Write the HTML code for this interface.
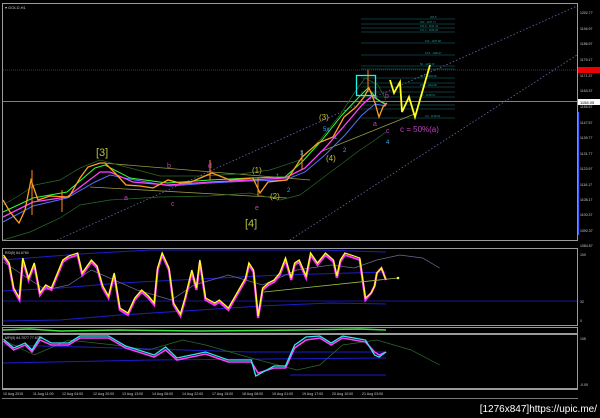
<!DOCTYPE html>
<html><head><meta charset="utf-8"><style>
html,body{margin:0;padding:0;background:#000;width:600px;height:418px;overflow:hidden}
svg{display:block}
text{font-family:"Liberation Sans",sans-serif}
</style></head><body>
<svg width="600" height="418" viewBox="0 0 600 418" xmlns="http://www.w3.org/2000/svg">
<rect width="600" height="418" fill="#000"/>
<g fill="none" stroke="#9a9a9a" stroke-width="1">
<rect x="2.5" y="3.5" width="575" height="237"/>
<rect x="2.5" y="248.5" width="575" height="77"/>
<rect x="2.5" y="327.5" width="575" height="6"/>
<rect x="2.5" y="334.5" width="575" height="54"/>
</g>
<line x1="2" y1="389.5" x2="578" y2="389.5" stroke="#9a9a9a"/>
<line x1="2" y1="398.5" x2="578" y2="398.5" stroke="#777"/>
<text x="5" y="9" fill="#ccc" font-size="4">▾ GOLD,H1</text>
<line x1="3" y1="70" x2="577" y2="70" stroke="#c00" stroke-dasharray="1,1"/>
<line x1="3" y1="101.5" x2="577" y2="101.5" stroke="#aaa" stroke-width="0.8"/>
<g stroke="#6a6ab0" stroke-width="0.8" stroke-dasharray="1.5,2" fill="none">
<line x1="57" y1="240" x2="577" y2="6"/>
<line x1="290" y1="240" x2="577" y2="55"/>
</g>
<!-- fib lines -->
<g stroke="#1d7070" stroke-width="0.5">
<line x1="361" y1="19" x2="455" y2="19"/><line x1="361" y1="24" x2="455" y2="24"/>
<line x1="361" y1="28" x2="455" y2="28"/><line x1="361" y1="32" x2="455" y2="32"/>
<line x1="361" y1="43" x2="455" y2="43"/><line x1="361" y1="55" x2="455" y2="55"/>
<line x1="361" y1="66" x2="455" y2="66"/><line x1="361" y1="69" x2="455" y2="69"/>
<line x1="361" y1="78" x2="455" y2="78"/><line x1="361" y1="83" x2="455" y2="83"/>
<line x1="361" y1="87" x2="455" y2="87"/><line x1="361" y1="92" x2="455" y2="92"/>
<line x1="361" y1="97" x2="455" y2="97"/><line x1="361" y1="105" x2="455" y2="105"/>
<line x1="361" y1="109" x2="455" y2="109"/><line x1="361" y1="118" x2="455" y2="118"/>
</g>
<g font-size="2.6" fill="#2a9a9a">
<text x="430" y="18">261.8</text><text x="420" y="23">200 - 1197.77</text><text x="420" y="27">161.8 - 1191.41</text><text x="420" y="31">127.2 - 1183.26</text>
<text x="425" y="42">100 - 1187.98</text><text x="425" y="54">61.8 - 1180.47</text><text x="420" y="65">50 - 1175.16</text>
<text x="420" y="77">38.2 - 1166.28</text><text x="420" y="86">23.6 - 1164.28</text><text x="420" y="96">0.0 - 1158.51</text><text x="425" y="117">0.0 - 1148.03</text>
</g>
<!-- triangle lines -->
<g stroke="#9a9a40" stroke-width="0.8" fill="none">
<line x1="103" y1="163" x2="310" y2="180"/>
<line x1="90" y1="187" x2="287" y2="198"/>
<line x1="320" y1="152" x2="417" y2="113"/>
</g>
<!-- envelopes -->
<polyline fill="none" stroke="#2a6a2a" stroke-width="0.7" points="3,205 20,195 35,185 60,180 80,168 100,160 130,168 160,176 200,176 240,174 270,170 300,160 320,140 340,115 355,92 365,78 378,85 386,100"/>
<polyline fill="none" stroke="#2a6a2a" stroke-width="0.7" points="3,240 30,232 60,218 80,205 110,200 160,197 210,196 250,193 280,200 300,195 320,180 340,165 360,150 375,140 386,132"/>
<!-- MAs -->
<polyline fill="none" stroke="#5070ff" stroke-width="1" points="3,222 33,206 67,198 95,182 110,175 135,180 170,186 210,183 250,181 285,180 305,172 325,155 345,135 362,115 375,104 386,106"/>
<polyline fill="none" stroke="#ff40ff" stroke-width="1.3" points="3,217 33,202 67,197 100,172 110,172 133,182 167,185 210,182 250,180 285,178 305,168 325,148 345,125 362,105 372,96 386,105"/>
<polyline fill="none" stroke="#30ff30" stroke-width="1" points="3,212 33,198 67,192 95,168 105,165 130,178 167,183 210,180 250,178 285,177 302,162 322,140 342,115 358,98 368,88 378,100 386,104"/>
<!-- price -->
<polyline fill="none" stroke="#ffa020" stroke-width="1.3" points="3,200 10,212 19,223 25,210 31,180 38,200 50,196 69,197 80,178 88,167 100,163 105,163 115,173 126,185 140,186 153,188 168,180 180,183 191,182 212,173 230,180 253,178 260,193 268,182 287,180 302,157 318,143 333,137 344,117 356,107 364,97 369,88 375,103 379,117 383,107 387,103"/>
<g stroke="#ff8a20" stroke-width="1">
<line x1="32" y1="170" x2="32" y2="215"/><line x1="62" y1="190" x2="62" y2="212"/><line x1="210" y1="160" x2="210" y2="180"/>
<line x1="258" y1="178" x2="258" y2="196"/><line x1="302" y1="150" x2="302" y2="170"/><line x1="368" y1="70" x2="368" y2="92"/>
</g>
<rect x="356.5" y="75.5" width="19" height="20" fill="none" stroke="#2ee" stroke-width="1.3"/>
<polyline fill="none" stroke="#ffff20" stroke-width="1.8" points="390,80 394,93 400,82 402,112 409,97 415,117 430,65"/>
<g font-size="11" fill="#b8c040">
<text x="96" y="156">[3]</text><text x="245" y="227">[4]</text>
</g>
<g font-size="8" fill="#c8c030">
<text x="252" y="173">(1)</text><text x="270" y="199">(2)</text><text x="319" y="120">(3)</text><text x="326" y="161">(4)</text>
</g>
<g font-size="7" fill="#c040c0">
<text x="167" y="168">b</text><text x="124" y="200">a</text><text x="171" y="206">c</text><text x="208" y="168">d</text><text x="255" y="210">e</text>
<text x="385" y="98">b</text><text x="373" y="126">a</text><text x="386" y="133">c</text><text x="400" y="132" font-size="8">c = 50%(a)</text>
</g>
<g font-size="6" fill="#3aa8e0">
<text x="300" y="155">3</text><text x="323" y="131">5x</text><text x="334" y="139">1</text><text x="343" y="152">2</text>
<text x="276" y="178">1</text><text x="287" y="192">2</text><text x="386" y="144">4</text>
</g>
<g font-size="3.5" fill="#ccc">
<text x="580" y="14">1202.77</text><text x="580" y="30">1194.97</text><text x="580" y="45">1186.97</text>
<text x="580" y="61">1179.17</text><text x="580" y="77">1171.37</text><text x="580" y="92">1163.37</text>
<text x="580" y="108">1155.57</text><text x="580" y="124">1147.57</text><text x="580" y="139">1139.77</text>
<text x="580" y="155">1131.77</text><text x="580" y="170">1123.97</text><text x="580" y="186">1116.17</text>
<text x="580" y="201">1108.17</text><text x="580" y="216">1100.37</text><text x="580" y="232">1092.37</text>
<text x="580" y="247">1084.57</text><text x="580" y="256">100</text><text x="580" y="303">32</text><text x="580" y="322">0</text>
<text x="580" y="340">105</text><text x="580" y="386">-0.00</text>
</g>
<rect x="578" y="67" width="22" height="6" fill="#e00"/>
<rect x="578" y="99" width="22" height="6" fill="#fff"/>
<text x="580" y="104" font-size="4" fill="#000">1158.05</text>
<line x1="578.5" y1="112" x2="578.5" y2="235" stroke="#4060ff" stroke-width="1.2"/>
<!-- RSI -->
<text x="5" y="254" font-size="3.5" fill="#ccc">RSI(5) 64.6760</text>
<g fill="none" stroke="#1c1ccc" stroke-width="1">
<polyline points="3,260 80,254 150,250 240,250 320,250 386,252"/>
<polyline points="3,291 60,288 120,283 200,279 280,275 386,272"/>
<polyline points="3,321 60,320 120,315 200,310 260,306 330,303 386,304"/>
<line x1="3" y1="301" x2="577" y2="301" stroke="#181890"/>
</g>
<g transform="scale(1.142,1)">
<polyline fill="none" stroke="#6a6a9a" stroke-width="0.7" points="3,262 20,275 40,290 60,285 80,270 100,280 120,290 150,300 170,285 200,275 230,285 260,270 290,265 310,268 330,260 350,255 370,258 385,268"/>
<polyline fill="none" stroke="#ff30ff" stroke-width="2" points="3,257 8,265 12,290 17,300 20,260 25,280 30,265 35,295 40,287 45,290 55,262 60,258 68,255 72,275 80,262 85,268 90,288 95,298 100,275 105,310 112,315 118,300 124,292 130,298 135,305 138,270 142,255 148,270 152,305 158,316 162,300 168,272 172,290 175,262 180,300 188,305 192,302 200,310 205,300 210,290 215,280 218,265 222,272 226,318 230,290 235,285 240,282 245,275 250,260 255,280 258,265 262,262 268,278 272,255 278,265 285,255 292,262 295,278 298,262 302,255 310,258 315,260 320,300 325,293 328,286 330,273 334,268 338,280"/>
<polyline fill="none" stroke="#ffff20" stroke-width="1.2" points="3,255 8,263 12,288 17,298 20,258 25,278 30,263 35,293 40,285 45,288 55,260 60,256 68,253 72,273 80,260 85,266 90,286 95,296 100,273 105,308 112,313 118,298 124,290 130,296 135,303 138,268 142,253 148,268 152,303 158,314 162,298 168,270 172,288 175,260 180,298 188,303 192,300 200,308 205,298 210,288 215,278 218,263 222,270 226,316 230,288 235,283 240,280 245,273 250,258 255,278 258,263 262,260 268,276 272,253 278,263 285,253 292,260 295,276 298,260 302,253 310,256 315,258 320,298 325,293 328,286 330,273 334,268 338,280"/>
</g>
<line x1="264" y1="292" x2="398" y2="278" stroke="#a0c040" stroke-width="0.8"/>
<circle cx="398" cy="278" r="1.3" fill="#e0ff60"/>
<polyline fill="none" stroke="#40e040" stroke-width="1.5" points="3,330 30,329 60,331 120,330 200,331 300,330 360,329 386,330"/>
<!-- bottom -->
<text x="5" y="339" font-size="3.5" fill="#ccc">MFI(5) 64.7077 77.6734</text>
<g stroke="#1c1ccc" stroke-width="1" fill="none">
<polyline points="3,345 120,348 250,352 386,352"/>
<polyline points="3,363 150,360 386,358"/>
<line x1="290" y1="375" x2="386" y2="375"/>
</g>
<g transform="scale(1.142,1)">
<polyline fill="none" stroke="#2a6a2a" stroke-width="0.7" points="3,340 30,355 60,340 100,345 130,350 160,340 180,345 220,358 260,370 280,365 300,345 330,340 360,350 385,365"/>
<polyline fill="none" stroke="#ff40ff" stroke-width="1.5" points="3,341 12,350 22,345 28,352 35,340 45,345 60,345 70,338 95,338 110,348 135,357 145,350 155,360 180,354 200,362 220,362 226,373 240,368 250,368 258,348 268,340 280,338 290,345 300,338 310,340 320,342 328,352 332,355 338,352"/>
<polyline fill="none" stroke="#30e8f0" stroke-width="1.2" points="3,339 12,348 22,343 28,350 35,337 45,343 60,343 70,336 95,336 110,346 135,355 145,347 155,358 180,352 200,360 220,360 224,376 240,366 250,366 258,345 268,337 280,336 290,343 300,336 310,338 320,340 328,355 332,357 338,352"/>
</g>
<g font-size="3.6" fill="#ccc">
<text x="3" y="395">10 Aug 2015</text><text x="33" y="395">11 Aug 11:00</text><text x="62" y="395">12 Aug 04:00</text>
<text x="93" y="395">12 Aug 20:00</text><text x="122" y="395">13 Aug 13:00</text><text x="152" y="395">14 Aug 06:00</text>
<text x="182" y="395">14 Aug 22:00</text><text x="212" y="395">17 Aug 15:00</text><text x="242" y="395">18 Aug 08:00</text>
<text x="272" y="395">19 Aug 01:00</text><text x="302" y="395">19 Aug 17:00</text><text x="332" y="395">20 Aug 10:00</text>
<text x="362" y="395">21 Aug 03:00</text>
</g>
<text x="597" y="412" text-anchor="end" font-size="10" fill="#fff" font-family="Liberation Mono,monospace">[1276x847]https://upic.me/</text>
</svg>
</body></html>
